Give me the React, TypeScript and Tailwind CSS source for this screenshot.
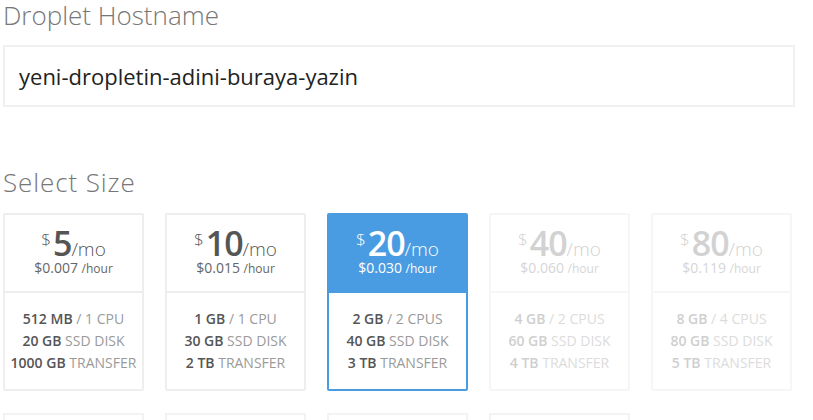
import React from 'react';

type Plan = {
  price: string;
  hour: string;
  ram: string;
  cpu: string;
  disk: string;
  transfer: string;
  state: 'normal' | 'selected' | 'disabled';
};

const plans: Plan[] = [
  { price: '5', hour: '$0.007', ram: '512 MB', cpu: '1 CPU', disk: '20 GB', transfer: '1000 GB', state: 'normal' },
  { price: '10', hour: '$0.015', ram: '1 GB', cpu: '1 CPU', disk: '30 GB', transfer: '2 TB', state: 'normal' },
  { price: '20', hour: '$0.030', ram: '2 GB', cpu: '2 CPUS', disk: '40 GB', transfer: '3 TB', state: 'selected' },
  { price: '40', hour: '$0.060', ram: '4 GB', cpu: '2 CPUS', disk: '60 GB', transfer: '4 TB', state: 'disabled' },
  { price: '80', hour: '$0.119', ram: '8 GB', cpu: '4 CPUS', disk: '80 GB', transfer: '5 TB', state: 'disabled' },
];

const PlanCard = ({ plan }: { plan: Plan }) => {
  const selected = plan.state === 'selected';
  const disabled = plan.state === 'disabled';

  const border = selected
    ? 'border-[#4a9ce2]'
    : disabled
    ? 'border-[#f6f6f6]'
    : 'border-[#eeeeee]';
  const strong = disabled ? 'text-[#cfcfcf]' : 'text-[#555555]';
  const light = disabled ? 'text-[#dcdcdc]' : 'text-[#9a9a9a]';

  return (
    <div className={`w-[141px] h-[178px] shrink-0 border-2 rounded-[2px] bg-white flex flex-col ${border}`}>
      <div
        className={`h-[76px] flex flex-col items-center pt-[13px] ${
          selected ? 'bg-[#4a9ce2] text-white' : disabled ? 'text-[#d2d2d2]' : 'text-[#555555]'
        }`}
      >
        <div className="flex items-start leading-none h-[31px]">
          <span className="text-[17px] mt-[3px] mr-[2px] font-light">$</span>
          <span className="text-[34px] leading-[31px] font-semibold tracking-[-1px]">{plan.price}</span>
          <span className="text-[19px] mt-[11px] leading-[20px] font-light">/mo</span>
        </div>
        <div className={`text-[14px] leading-[18px] ${selected ? 'text-white' : disabled ? 'text-[#d6d6d6]' : 'text-[#666666]'}`}>
          {plan.hour} <span className="text-[12px]">/hour</span>
        </div>
      </div>
      <div className={`border-t-2 ${selected ? 'border-[#4a9ce2]' : disabled ? 'border-[#f6f6f6]' : 'border-[#eeeeee]'} flex-1 flex flex-col items-center pt-[15px] text-[14px] leading-[22px]`}>
        <div>
          <span className={`font-semibold ${strong}`}>{plan.ram}</span>
          <span className={light}> / {plan.cpu}</span>
        </div>
        <div>
          <span className={`font-semibold ${strong}`}>{plan.disk}</span>
          <span className={light}> SSD DISK</span>
        </div>
        <div>
          <span className={`font-semibold ${strong}`}>{plan.transfer}</span>
          <span className={light}> TRANSFER</span>
        </div>
      </div>
    </div>
  );
};

export default function App() {
  return (
    <div className="w-[813px] h-[420px] overflow-hidden bg-white pl-[3px] font-['Open_Sans',sans-serif]">
      <h2 className="text-[26px] leading-[30px] font-light text-[#777777]">Droplet Hostname</h2>

      <div className="mt-[15px] w-[792px] h-[62px] border-2 border-[#f0f0f0] flex items-center pl-[14px]">
        <span className="text-[22px] text-[#222222]">yeni-dropletin-adini-buraya-yazin</span>
      </div>

      <h2 className="mt-[60px] text-[26px] leading-[30px] font-light text-[#777777] tracking-[0.9px]">Select Size</h2>

      {/* size cards */}
      <div className="mt-[16px] flex gap-[21px]">
        {plans.map((p) => (
          <PlanCard key={p.price} plan={p} />
        ))}
      </div>

      <div className="mt-[22px] flex gap-[21px]">
        {[0, 1, 2, 3].map((i) => (
          <div key={i} className="w-[141px] h-[60px] shrink-0 border-2 border-[#f3f3f3]" />
        ))}
      </div>
    </div>
  );
}
